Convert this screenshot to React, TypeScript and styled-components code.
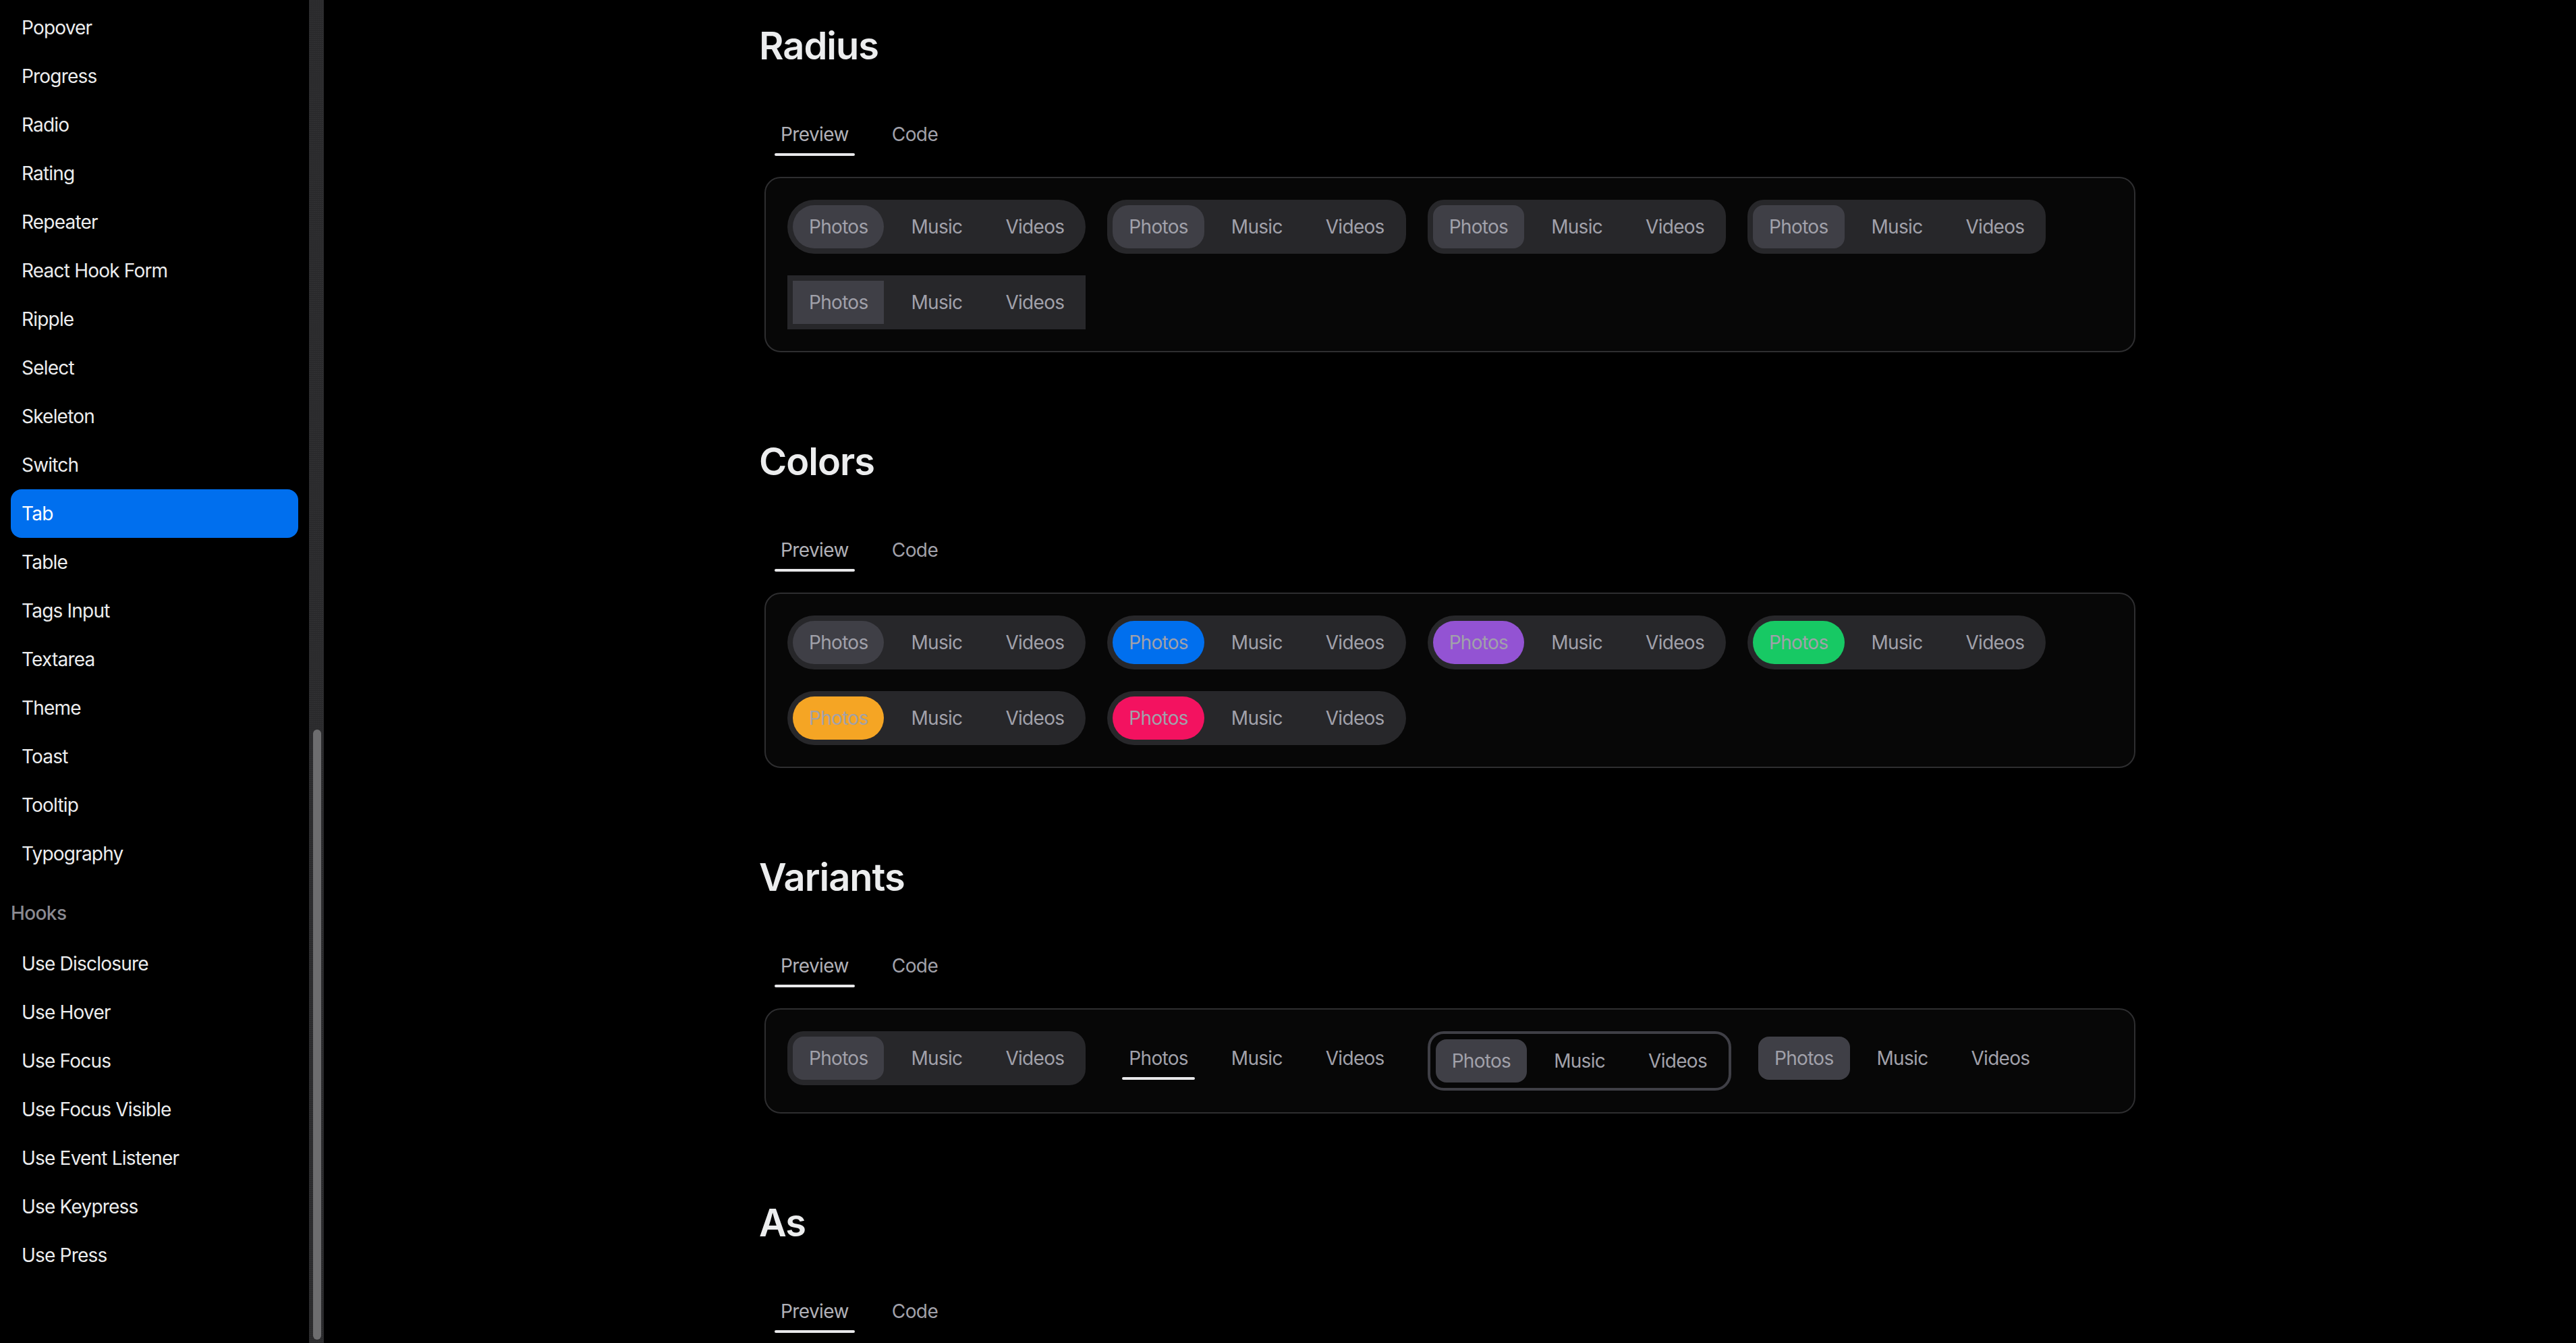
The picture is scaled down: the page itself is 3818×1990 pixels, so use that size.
import React from "react";
import styled, { createGlobalStyle, css } from "styled-components";

type Radius = "full" | "lg" | "md" | "sm" | "none";
type Variant = "solid" | "underlined" | "bordered" | "light";
type Color = "default" | "primary" | "secondary" | "success" | "warning" | "danger";

const listRadius: Record<Radius, string> = {
  full: "9999px",
  lg: "28px",
  md: "24px",
  sm: "24px",
  none: "0",
};

const tabRadius: Record<Radius, string> = {
  full: "9999px",
  lg: "24px",
  md: "16px",
  sm: "16px",
  none: "0",
};

const cursorColors: Record<Color, string> = {
  default: "#3f3f46",
  primary: "#006fee",
  secondary: "#9353d3",
  success: "#17c964",
  warning: "#f5a524",
  danger: "#f31260",
};

const GlobalStyle = createGlobalStyle`
  html, body {
    margin: 0;
    padding: 0;
    background: #000;
    overflow: hidden;
  }
  body {
    font-family: Inter, "Noto Sans", sans-serif;
    color: #ecedee;
  }
  * {
    box-sizing: border-box;
  }
`;

const Layout = styled.div`
  display: flex;
  height: 100vh;
  overflow: hidden;
`;

const Sidebar = styled.nav`
  width: 458px;
  flex-shrink: 0;
  display: flex;
  flex-direction: column;
  padding: 5px 16px 0;
`;

const NavItem = styled.div<{ $active?: boolean }>`
  height: 72px;
  flex-shrink: 0;
  display: flex;
  align-items: center;
  padding: 0 16px;
  border-radius: 16px;
  font-size: 28px;
  letter-spacing: -0.8px;
  color: ${(p) => (p.$active ? "#ffffff" : "#ecedee")};
  background: ${(p) => (p.$active ? "#006fee" : "transparent")};
`;

const NavLabel = styled.div`
  padding: 34px 0 21px;
  line-height: 36px;
  font-size: 28px;
  font-weight: 500;
  letter-spacing: -0.6px;
  color: #8a8a91;
`;

const ScrollTrack = styled.div`
  width: 22px;
  flex-shrink: 0;
  display: flex;
  flex-direction: column;
  padding: 1081px 4px 5px 6px;
  background-color: #2a2a2c;
  background-image: radial-gradient(circle, #3a3a3c 0.7px, transparent 0.9px);
  background-size: 3px 3px;
`;

const ScrollThumb = styled.div`
  flex: 1;
  border-radius: 6px;
  background: #6d6d6f;
`;

const Main = styled.main`
  flex: 1;
  display: flex;
  justify-content: center;
  overflow: hidden;
`;

const Column = styled.div`
  width: 2048px;
  flex-shrink: 0;
  display: flex;
  flex-direction: column;
  padding-top: 34px;
`;

const Section = styled.section`
  display: flex;
  flex-direction: column;
  & + & {
    margin-top: 128px;
  }
`;

const Heading = styled.h2`
  margin: 0;
  font-size: 56px;
  line-height: 68px;
  font-weight: 600;
  letter-spacing: -1px;
  color: #ecedee;
`;

const DocTabs = styled.div`
  display: flex;
  gap: 16px;
  padding: 8px;
  margin-top: 57px;
`;

const DocTab = styled.div<{ $active?: boolean }>`
  position: relative;
  height: 64px;
  padding: 0 24px;
  display: flex;
  align-items: center;
  font-size: 28px;
  letter-spacing: -0.6px;
  color: ${(p) => (p.$active ? "#b1b1b8" : "#a1a1aa")};
  ${(p) =>
    p.$active &&
    css`
      &::after {
        content: "";
        position: absolute;
        left: 10%;
        bottom: 0;
        width: 80%;
        height: 4px;
        border-radius: 2px;
        background: #e8e8ea;
      }
    `}
`;

const PreviewBox = styled.div`
  margin: 23px 8px 0;
  min-height: 148px;
  border: 2px solid #2e2e30;
  border-radius: 24px;
  background: #070707;
  padding: 32px;
  display: flex;
  flex-wrap: wrap;
  align-items: flex-start;
  gap: 32px;
`;

const TabList = styled.div<{ $variant: Variant; $radius: Radius }>`
  display: inline-flex;
  align-items: center;
  gap: 16px;
  padding: 8px;
  border-radius: ${(p) => listRadius[p.$radius]};
  background: ${(p) => (p.$variant === "solid" ? "#27272a" : "transparent")};
  border: ${(p) => (p.$variant === "bordered" ? "4px solid #3f3f46" : "none")};
`;

const Tab = styled.div<{
  $selected?: boolean;
  $variant: Variant;
  $radius: Radius;
  $color: Color;
}>`
  position: relative;
  height: 64px;
  padding: 0 24px;
  display: flex;
  align-items: center;
  font-size: 28px;
  letter-spacing: -0.7px;
  color: #a1a1aa;
  border-radius: ${(p) => tabRadius[p.$radius]};
  background: ${(p) =>
    p.$selected && p.$variant !== "underlined" ? cursorColors[p.$color] : "transparent"};
  ${(p) =>
    p.$selected &&
    p.$variant === "underlined" &&
    css`
      &::after {
        content: "";
        position: absolute;
        left: 10%;
        bottom: 0;
        width: 80%;
        height: 4px;
        border-radius: 2px;
        background: #e8e8ea;
      }
    `}
`;

const componentLinks = [
  "Popover",
  "Progress",
  "Radio",
  "Rating",
  "Repeater",
  "React Hook Form",
  "Ripple",
  "Select",
  "Skeleton",
  "Switch",
  "Tab",
  "Table",
  "Tags Input",
  "Textarea",
  "Theme",
  "Toast",
  "Tooltip",
  "Typography",
];

const hookLinks = [
  "Use Disclosure",
  "Use Hover",
  "Use Focus",
  "Use Focus Visible",
  "Use Event Listener",
  "Use Keypress",
  "Use Press",
];

const items = ["Photos", "Music", "Videos"];

interface TabsProps {
  variant?: Variant;
  radius?: Radius;
  color?: Color;
}

function Tabs({ variant = "solid", radius = "md", color = "default" }: TabsProps) {
  return (
    <TabList $variant={variant} $radius={radius}>
      {items.map((item, i) => (
        <Tab
          key={item}
          $selected={i === 0}
          $variant={variant}
          $radius={radius}
          $color={color}
        >
          {item}
        </Tab>
      ))}
    </TabList>
  );
}

function DocSection({ title, children }: { title: string; children?: React.ReactNode }) {
  return (
    <Section>
      <Heading>{title}</Heading>
      <DocTabs>
        <DocTab $active>Preview</DocTab>
        <DocTab>Code</DocTab>
      </DocTabs>
      <PreviewBox>{children}</PreviewBox>
    </Section>
  );
}

const radii: Radius[] = ["full", "lg", "md", "sm", "none"];
const colors: Color[] = ["default", "primary", "secondary", "success", "warning", "danger"];
const variants: Variant[] = ["solid", "underlined", "bordered", "light"];

export default function App() {
  return (
    <>
      <GlobalStyle />
      <Layout>
        <Sidebar>
          {componentLinks.map((name) => (
            <NavItem key={name} $active={name === "Tab"}>
              {name}
            </NavItem>
          ))}
          <NavLabel>Hooks</NavLabel>
          {hookLinks.map((name) => (
            <NavItem key={name}>{name}</NavItem>
          ))}
        </Sidebar>
        <ScrollTrack>
          <ScrollThumb />
        </ScrollTrack>
        <Main>
          <Column>
            <DocSection title="Radius">
              {radii.map((r) => (
                <Tabs key={r} radius={r} />
              ))}
            </DocSection>
            <DocSection title="Colors">
              {colors.map((c) => (
                <Tabs key={c} radius="full" color={c} />
              ))}
            </DocSection>
            <DocSection title="Variants">
              {variants.map((v) => (
                <Tabs key={v} variant={v} />
              ))}
            </DocSection>
            {/* the As example sits below the fold in the reference */}
            <DocSection title="As" />
          </Column>
        </Main>
      </Layout>
    </>
  );
}
